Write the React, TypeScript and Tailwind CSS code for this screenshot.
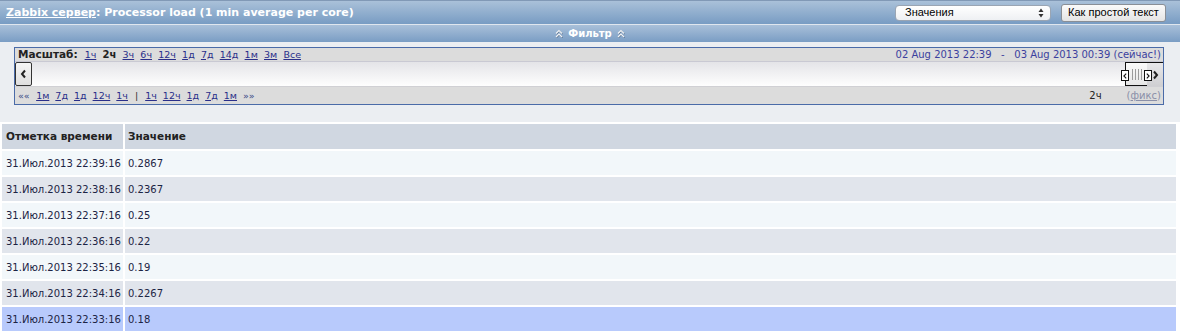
import React from "react";

const bold = { fontFamily: '"DejaVu Sans", Verdana, sans-serif' };
const dv = { fontFamily: '"DejaVu Sans", Verdana, sans-serif' };
const reg = { fontFamily: '"Liberation Sans", Arial, sans-serif' };

const rows = [
  ["31.Июл.2013 22:39:16", "0.2867"],
  ["31.Июл.2013 22:38:16", "0.2367"],
  ["31.Июл.2013 22:37:16", "0.25"],
  ["31.Июл.2013 22:36:16", "0.22"],
  ["31.Июл.2013 22:35:16", "0.19"],
  ["31.Июл.2013 22:34:16", "0.2267"],
  ["31.Июл.2013 22:33:16", "0.18"],
];

function DoubleUp() {
  return (
    <svg width="8" height="9" viewBox="0 0 8 9" className="block">
      <path d="M1 4.5 L4 1.5 L7 4.5" fill="none" stroke="#5a6f88" strokeWidth="1.2" transform="translate(0.5,0.6)" />
      <path d="M1 8 L4 5 L7 8" fill="none" stroke="#5a6f88" strokeWidth="1.2" transform="translate(0.5,0.6)" />
      <path d="M1 4.5 L4 1.5 L7 4.5" fill="none" stroke="#f2f4f7" strokeWidth="1.2" />
      <path d="M1 8 L4 5 L7 8" fill="none" stroke="#f2f4f7" strokeWidth="1.2" />
    </svg>
  );
}

const scaleLinks = ["1ч", "2ч", "3ч", "6ч", "12ч", "1д", "7д", "14д", "1м", "3м", "Все"];
const backLinks = ["1м", "7д", "1д", "12ч", "1ч"];
const fwdLinks = ["1ч", "12ч", "1д", "7д", "1м"];

export default function App() {
  return (
    <div className="w-[1180px] h-[331px] overflow-hidden bg-[#ebeef2]" style={reg}>
      {/* Header bar */}
      <div className="h-[24px] flex items-center justify-between pl-[6px] pr-[14px] border-t border-[#8199b6] bg-gradient-to-b from-[#aac1d9] to-[#789cc3]">
        <div className="text-[11px] font-bold text-white leading-none" style={bold}>
          <span className="underline">Zabbix сервер</span>: Processor load (1 min average per core)
        </div>
        <div className="flex items-center">
          <div className="w-[156px] h-[16px] rounded-[4px] border border-[#9aa5b3] bg-gradient-to-b from-white to-[#eef0f3] flex items-center justify-between pl-[9px] pr-[6px] text-[11px] text-black leading-none">
            <span>Значения</span>
            <svg width="6" height="10" viewBox="0 0 6 10">
              <path d="M3 0.5 L5.5 4 L0.5 4 Z" fill="#333" />
              <path d="M3 9.5 L5.5 6 L0.5 6 Z" fill="#333" />
            </svg>
          </div>
          <div className="ml-[10px] w-[105px] h-[18px] rounded-[3px] border border-[#8a8f96] bg-gradient-to-b from-[#fbfbfb] to-[#e4e4e4] flex items-center justify-center text-[11px] text-black leading-none">
            Как простой текст
          </div>
        </div>
      </div>
      <div className="h-px bg-[#dfe6ee]" />
      {/* Filter bar */}
      <div className="h-[17px] flex items-center justify-center gap-[5px] bg-gradient-to-b from-[#a9c0d9] to-[#7a9dc4]">
        <DoubleUp />
        <span className="text-[10px] font-bold text-white leading-none" style={bold}>Фильтр</span>
        <DoubleUp />
      </div>
      {/* Filter panel */}
      <div className="pl-[14px] pr-[16px] pt-[5px]">
        <div className="border border-[#4a6ba8] h-[58px] flex flex-col" style={dv}>
          <div className="h-[14px] bg-[#dcdcdc] border-b border-[#c9c9d3] flex items-center justify-between pl-[3px] pr-[2px] text-[9.5px] leading-none">
            <div className="flex items-center">
              <span className="font-bold text-[10.5px] text-[#222] mr-[7px]">Масштаб:</span>
              {scaleLinks.map((l) =>
                l === "2ч" ? (
                  <span key={l} className="font-bold text-[10px] text-[#222] mr-[6.2px]">{l}</span>
                ) : (
                  <span key={l} className="underline text-[#2a2f8a] mr-[6.2px]">{l}</span>
                )
              )}
            </div>
            <div className="text-[10px] text-[#3b3f9e] whitespace-pre">02 Aug 2013 22:39   -   03 Aug 2013 00:39 (сейчас!)</div>
          </div>
          <div className="h-[25px] border-b border-[#d0d0d4] bg-gradient-to-b from-[#e4e4e8] to-[#fefefe] flex">
            <div className="w-[17px] border border-[#333] rounded-[2px] bg-gradient-to-b from-[#f6f6f6] to-[#dedede] flex items-center justify-center">
              <svg width="7" height="10" viewBox="0 0 7 10">
                <path d="M5 1.5 L2 5 L5 8.5" fill="none" stroke="#222" strokeWidth="2" />
              </svg>
            </div>
            <div className="flex-1" />
            <div className="relative w-[22px] border-t border-l border-b border-[#111] bg-gradient-to-b from-[#fafafa] to-[#e6e6e6] flex items-center justify-center gap-[2px]">
              <span className="w-px h-[11px] bg-[#9a9a9a]" />
              <span className="w-px h-[11px] bg-[#9a9a9a]" />
              <span className="w-px h-[11px] bg-[#9a9a9a]" />
              <span className="w-px h-[11px] bg-[#9a9a9a]" />
              <div className="absolute left-[-5px] top-[7px] w-[8px] h-[11px] bg-white border border-[#111] flex items-center justify-center">
                <svg width="4" height="6" viewBox="0 0 4 6">
                  <path d="M3.2 0.6 L0.9 3 L3.2 5.4" fill="none" stroke="#111" strokeWidth="1.1" />
                </svg>
              </div>
              <div className="absolute right-[-5px] top-[7px] w-[8px] h-[11px] bg-white border border-[#111] flex items-center justify-center">
                <svg width="4" height="6" viewBox="0 0 4 6">
                  <path d="M0.8 0.6 L3.1 3 L0.8 5.4" fill="none" stroke="#111" strokeWidth="1.1" />
                </svg>
              </div>
            </div>
            <div className="w-[16px] border-t border-[#111] bg-gradient-to-b from-[#e8e8ea] to-[#cfcfd2] flex items-center justify-center">
              <svg width="7" height="10" viewBox="0 0 7 10">
                <path d="M2 1.5 L5 5 L2 8.5" fill="none" stroke="#222" strokeWidth="2" />
              </svg>
            </div>
          </div>
          <div className="flex-1 bg-[#dcdcdc] flex items-center justify-between pl-[3px] pr-[2px] text-[9.5px] leading-none">
            <div className="flex items-center">
              <span className="text-[#3a4a86] mr-[6.5px]">««</span>
              {backLinks.map((l, i) => (
                <span key={"b" + i} className="underline text-[#2a2f8a] mr-[6px]">{l}</span>
              ))}
              <span className="text-[#333] mr-[7px] ml-[1px]">|</span>
              {fwdLinks.map((l, i) => (
                <span key={"f" + i} className="underline text-[#2a2f8a] mr-[6px]">{l}</span>
              ))}
              <span className="text-[#3a4a86]">»»</span>
            </div>
            <div className="flex items-center text-[10px]">
              <span className="text-[#222] mr-[25px]">2ч</span>
              <span className="text-[#8a8fa8]">(<span className="underline">фикс</span>)</span>
            </div>
          </div>
        </div>
      </div>
      {/* Table */}
      <div className="mt-[17px] bg-white pr-[2px]" style={dv}>
        <table className="w-full border-separate border-spacing-[2px] text-left">
          <thead>
            <tr>
              <th className="h-[25px] w-[121px] bg-[#d0d7e1] pl-[4px] text-[10.5px] font-bold text-[#222] whitespace-nowrap">Отметка времени</th>
              <th className="h-[25px] bg-[#d0d7e1] pl-[3px] text-[10.5px] font-bold text-[#222]">Значение</th>
            </tr>
          </thead>
          <tbody>
            {rows.map((r, i) => {
              const bg = i === 6 ? "bg-[#b8cafc]" : i % 2 === 0 ? "bg-[#f2f7fa]" : "bg-[#e1e5ec]";
              return (
                <tr key={i}>
                  <td className={`h-[24px] pl-[4px] text-[10px] text-[#1c2444] whitespace-nowrap ${bg}`}>{r[0]}</td>
                  <td className={`h-[24px] pl-[3px] text-[10px] text-[#1c2444] ${bg}`}>{r[1]}</td>
                </tr>
              );
            })}
          </tbody>
        </table>
      </div>
    </div>
  );
}
